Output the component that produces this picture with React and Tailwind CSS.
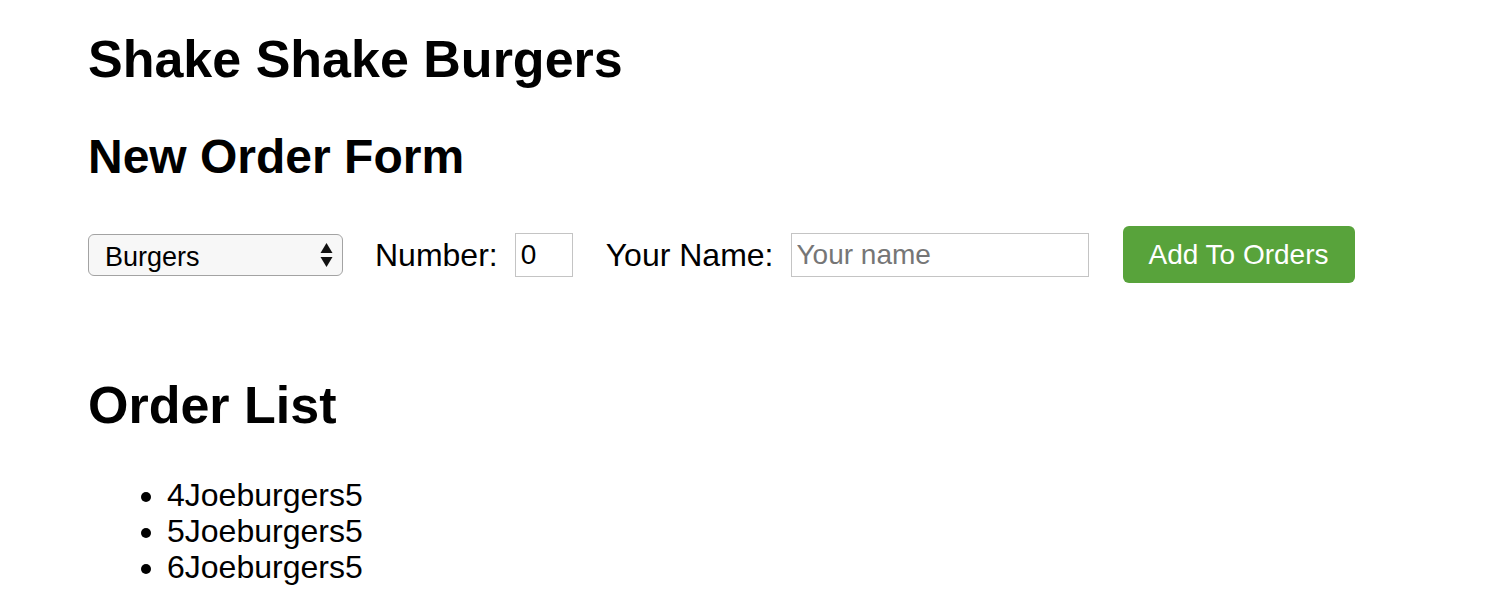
import React, { useState } from "react";

export default function App() {
  const [item, setItem] = useState("burgers");
  const [count, setCount] = useState("0");
  const [name, setName] = useState("");
  const orders = ["4Joeburgers5", "5Joeburgers5", "6Joeburgers5"];

  return (
    <div className="min-h-screen bg-white pl-[88px] pt-[33px] text-black font-['Liberation_Sans',Arial,sans-serif]">
      <h1 className="text-[52px] font-bold leading-[52px]">Shake Shake Burgers</h1>

      <h2 className="mt-[48px] text-[48px] font-bold leading-[48px]">New Order Form</h2>

      {/* Form */}
      <div className="mt-[45px] flex items-center">
        <div className="relative">
          <select
            value={item}
            onChange={(e) => setItem(e.target.value)}
            className="h-[42px] w-[255px] appearance-none rounded-[6px] border border-[#a3a3a3] bg-[#f7f7f7] pt-[4px] pb-0 pl-[16px] text-[27px] leading-[36px] text-black outline-none"
          >
            <option value="burgers">Burgers</option>
            <option value="shakes">Shakes</option>
            <option value="fries">Fries</option>
          </select>
          <svg
            className="pointer-events-none absolute right-[10px] top-[8px]"
            width="13"
            height="26"
            viewBox="0 0 13 26"
          >
            <path d="M6.5 1 L12.5 11 H0.5 Z" fill="#111" />
            <path d="M6.5 25 L12.5 15 H0.5 Z" fill="#111" />
          </svg>
        </div>

        <label className="ml-[32px] text-[32px] leading-none">Number:</label>
        <input
          type="text"
          value={count}
          onChange={(e) => setCount(e.target.value)}
          className="ml-[17px] h-[44px] w-[58px] border border-[#c4c4c4] pl-[5px] text-[28px] leading-none outline-none"
        />

        <label className="ml-[33px] text-[32px] leading-none">Your Name:</label>
        <input
          type="text"
          value={name}
          placeholder="Your name"
          onChange={(e) => setName(e.target.value)}
          className="ml-[17px] h-[44px] w-[298px] border border-[#c4c4c4] pl-[5px] text-[28px] leading-none outline-none placeholder:text-[#767676]"
        />

        <button className="ml-[34px] h-[57px] w-[232px] rounded-[6px] bg-[#58a33b] text-[28px] leading-none text-white">
          Add To Orders
        </button>
      </div>

      <h3 className="mt-[96px] text-[52px] font-bold leading-[52px]">Order List</h3>

      <ul className="mt-[46px] list-disc pl-[79px] text-[32px] leading-[36px]">
        {orders.map((o, i) => (
          <li key={i}>{o}</li>
        ))}
      </ul>
    </div>
  );
}
